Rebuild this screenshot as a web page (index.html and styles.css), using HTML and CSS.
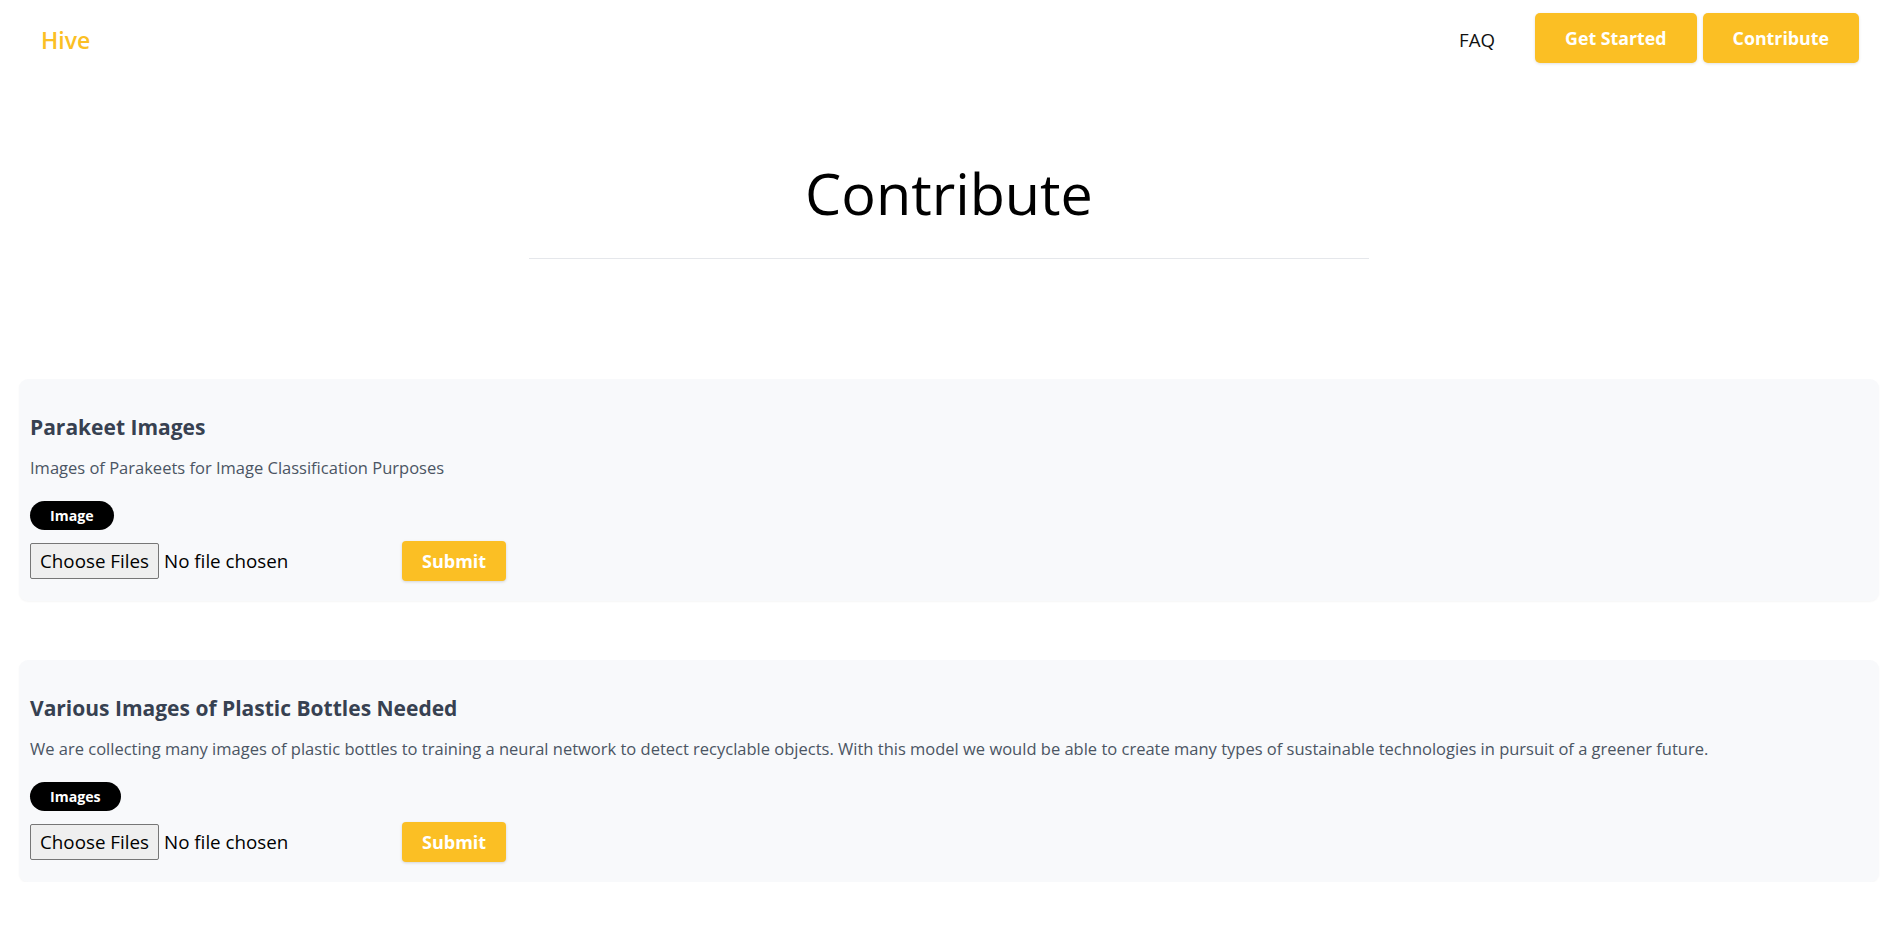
FILE: index.html
```html
<!DOCTYPE html>
<html lang="en">
<head>
<meta charset="utf-8">
<title>Hive - Contribute</title>
<link rel="stylesheet" href="styles.css">
</head>
<body>
  <nav class="nav">
    <a class="brand" href="#">Hive</a>
    <div class="nav-links">
      <a class="nav-link" href="#">FAQ</a>
      <a class="btn-nav" href="#">Get Started</a>
      <a class="btn-nav" href="#">Contribute</a>
    </div>
  </nav>

  <main class="main">
    <h1 class="page-title">Contribute</h1>
    <hr class="divider">

    <section class="cards">
      <article class="card">
        <h2 class="card-title">Parakeet Images</h2>
        <p class="card-desc">Images of Parakeets for Image Classification Purposes</p>
        <span class="badge">Image</span>
        <form class="upload">
          <input class="file" type="file" multiple>
          <button class="btn-submit" type="button">Submit</button>
        </form>
      </article>

      <article class="card">
        <h2 class="card-title">Various Images of Plastic Bottles Needed</h2>
        <p class="card-desc">We are collecting many images of plastic bottles to training a neural network to detect recyclable objects. With this model we would be able to create many types of sustainable technologies in pursuit of a greener future.</p>
        <span class="badge">Images</span>
        <form class="upload">
          <input class="file" type="file" multiple>
          <button class="btn-submit" type="button">Submit</button>
        </form>
      </article>
    </section>
  </main>
</body>
</html>
```

FILE: styles.css
```css
* { box-sizing: border-box; }

html, body {
  margin: 0;
  padding: 0;
  background: #ffffff;
}

body {
  font-family: "Open Sans", "Noto Sans", Arial, sans-serif;
  color: #111111;
}

a { text-decoration: none; }

.nav {
  display: flex;
  align-items: center;
  justify-content: space-between;
  padding: 13px 30px 0 41px;
  height: 63px;
}

.brand {
  color: #fbbf24;
  font-size: 23px;
  font-weight: 600;
  line-height: 30px;
  margin-top: 4px;
}

.nav-links {
  display: flex;
  align-items: center;
  gap: 6px;
}

.nav-link {
  color: #111111;
  font-size: 18.7px;
  margin-right: 34px;
  margin-top: 2px;
}

.btn-nav {
  display: flex;
  align-items: center;
  justify-content: center;
  height: 50px;
  padding: 0 30px;
  background: #fbbf24;
  color: #ffffff;
  font-size: 17.8px;
  font-weight: 700;
  border-radius: 5px;
  box-shadow: 0 1px 3px rgba(0, 0, 0, 0.12);
}

.main {
  margin: 0 10px 0 19px;
}

.page-title {
  margin: 96px 0 0;
  text-align: center;
  font-size: 57.5px;
  font-weight: 400;
  line-height: 68px;
  color: #000000;
}

.divider {
  width: 840px;
  margin: 31px auto 0;
  border: 0;
  border-top: 1px solid #e5e7eb;
  height: 0;
}

.cards {
  display: flex;
  flex-direction: column;
  gap: 59px;
  margin-top: 120px;
}

.card {
  display: flex;
  flex-direction: column;
  align-items: flex-start;
  background: #f8f9fb;
  border-radius: 9px;
  box-shadow: 0 1px 2px rgba(0, 0, 0, 0.04);
  padding: 34px 11px 20px;
}

.card-title {
  margin: 0;
  font-size: 21px;
  line-height: 28px;
  font-weight: 700;
  color: #374151;
}

.card-desc {
  margin: 15px 0 0;
  font-size: 16.5px;
  line-height: 24px;
  color: #4b5563;
}

.badge {
  display: inline-flex;
  align-items: center;
  height: 29px;
  margin-top: 21px;
  padding: 0 20px;
  border-radius: 999px;
  background: #000000;
  color: #ffffff;
  font-size: 14.2px;
  font-weight: 700;
}

.upload {
  display: flex;
  align-items: center;
  height: 40px;
  margin: 11px 0 0;
}

.file {
  width: 372px;
  font-family: "Open Sans", "Noto Sans", Arial, sans-serif;
  font-size: 18.8px;
  color: #000000;
}

.file::file-selector-button {
  font-family: inherit;
  font-size: 18.8px;
  line-height: 26px;
  color: #000000;
  background: #efefef;
  border: 1px solid #767676;
  border-radius: 2px;
  padding: 4px 9px;
  margin-right: 5px;
}

.btn-submit {
  height: 40px;
  padding: 0 20px;
  border: 0;
  border-radius: 4px;
  background: #fbbf24;
  color: #ffffff;
  font-family: inherit;
  font-size: 18px;
  font-weight: 700;
  box-shadow: 0 1px 3px rgba(0, 0, 0, 0.15);
}
```
